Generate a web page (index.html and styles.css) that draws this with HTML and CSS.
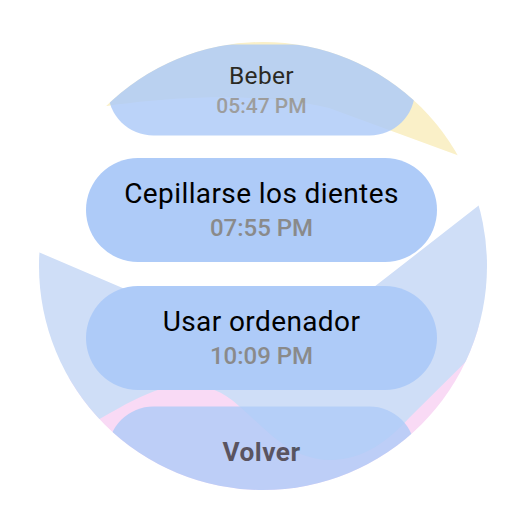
FILE: index.html
```html
<!DOCTYPE html>
<html lang="es">
<head>
  <meta charset="UTF-8">
  <meta name="viewport" content="width=device-width, initial-scale=1">
  <title>Recordatorios</title>
  <link rel="stylesheet" href="styles.css">
</head>
<body>
  <div class="screen">
    <!-- Fondo decorativo -->
    <svg class="backdrop" viewBox="0 0 448 448" width="448" height="448">
      <path class="yellow" d="M-10,78 C80,58 200,45 290,66 L470,132 V-10 H-10 Z"/>
      <path class="pink" d="M-10,340 L470,280 V470 H-10 Z"/>
      <path class="blue" d="M-10,206 L245,315 L470,140 V277 L371,375 C350,398 325,418 291,418 C250,418 225,385 200,364 C180,346 160,340 134,344 C100,350 60,378 -10,420 Z"/>
    </svg>

    <div class="list">
      <div class="chip edge top">
        <span class="title">Beber</span>
        <span class="time">05:47 PM</span>
      </div>
      <div class="chip">
        <span class="title">Cepillarse los dientes</span>
        <span class="time">07:55 PM</span>
      </div>
      <div class="chip">
        <span class="title">Usar ordenador</span>
        <span class="time">10:09 PM</span>
      </div>
      <div class="chip edge bottom">
        <span class="label">Volver</span>
      </div>
    </div>
  </div>
</body>
</html>
```

FILE: styles.css
```css
body {
  margin: 0;
  background: #ffffff;
  font-family: Roboto, "Noto Sans", sans-serif;
}

/* Pantalla redonda del reloj */
.screen {
  position: relative;
  width: 448px;
  height: 448px;
  margin: 42px 0 0 39px;
  border-radius: 50%;
  overflow: hidden;
  background: #ffffff;
}

.backdrop {
  position: absolute;
  top: 0;
  left: 0;
}

.yellow { fill: #faf0c8; }
.pink { fill: #f9daf5; }
.blue { fill: #cfdef7; }

.list {
  position: relative;
  display: flex;
  flex-direction: column;
  align-items: center;
  padding-right: 3px;
}

.chip {
  width: 351px;
  height: 104px;
  flex-shrink: 0;
  margin-top: 24px;
  border-radius: 52px;
  background: #aecbf8;
  display: flex;
  flex-direction: column;
  align-items: center;
  justify-content: center;
}

.title {
  font-size: 28px;
  line-height: 32px;
  letter-spacing: 0.4px;
  color: #000000;
}

.time {
  margin-top: 4px;
  font-size: 24px;
  line-height: 28px;
  font-weight: 500;
  color: #8a8a8a;
}

/* Elementos en el borde, reducidos */
.edge {
  transform: scale(0.875);
}

.top {
  margin-top: -4.5px;
  margin-bottom: -7.5px;
  opacity: 0.83;
}

.bottom {
  margin-top: 9.5px;
  opacity: 0.8;
}

.label {
  font-size: 30px;
  line-height: 36px;
  font-weight: 700;
  letter-spacing: 0.5px;
  color: #33333b;
}
```
